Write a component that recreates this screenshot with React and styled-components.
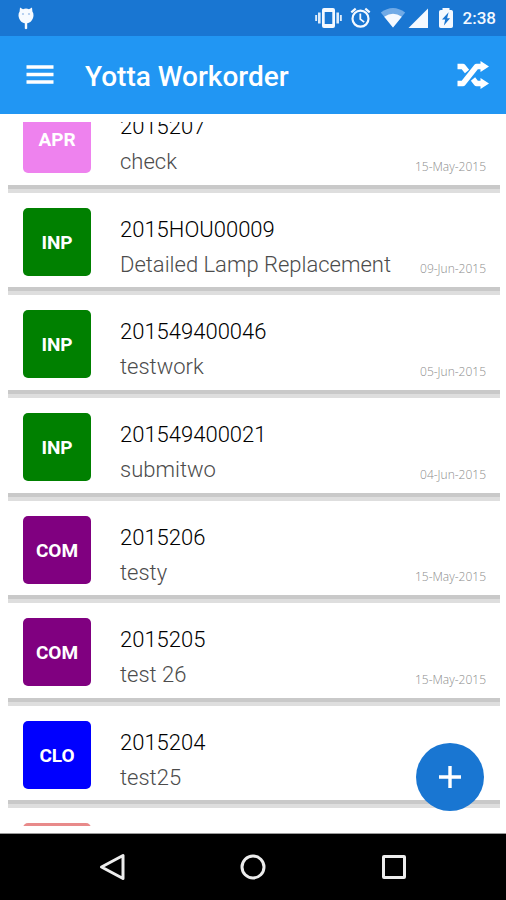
import React from "react";
import styled, { createGlobalStyle } from "styled-components";

const GlobalStyle = createGlobalStyle`
  * { box-sizing: border-box; }
  body { margin: 0; background: #fff; font-family: Roboto, "Noto Sans", sans-serif; }
  button { border: 0; padding: 0; background: none; color: inherit; font: inherit; cursor: pointer; }
  svg { display: block; }
`;

const Screen = styled.div`
  display: flex;
  flex-direction: column;
  height: 100vh;
`;

const StatusBar = styled.div`
  display: flex;
  align-items: center;
  justify-content: space-between;
  height: 36px;
  flex: none;
  padding: 0 10px 0 17px;
  background: #1976d2;
  color: #f4f9ff;
`;

const StatusIcons = styled.div`
  display: flex;
  align-items: center;
`;

const Clock = styled.time`
  margin-left: 8px;
  font-size: 17px;
  font-weight: 500;
  line-height: 36px;
`;

const AppBar = styled.header`
  display: flex;
  align-items: center;
  height: 78px;
  flex: none;
  padding: 0 17px 0 26px;
  background: #2196f3;
  color: #fff;
`;

const Title = styled.h1`
  flex: 1;
  margin: 0 0 0 31px;
  padding-top: 3px;
  font-size: 28px;
  font-weight: 500;
  line-height: 36px;
`;

const IconButton = styled.button`
  display: flex;
`;

const Main = styled.main`
  position: relative;
  display: flex;
  flex: 1;
  min-height: 0;
  padding: 8px 6px 7px 8px;
  border-bottom: 1px solid #9a9a9a;
`;

const ListWindow = styled.div`
  flex: 1;
  min-width: 0;
  overflow: hidden;
`;

const OrderList = styled.ul`
  display: grid;
  grid-template-columns: 100%;
  grid-auto-rows: 1fr;
  height: 821px;
  margin: -32px 0 0;
  padding: 0;
  list-style: none;
`;

const Row = styled.li`
  display: grid;
  grid-template-columns: 68px minmax(0, 1fr) auto;
  column-gap: 29px;
  align-items: start;
  padding: 15px 14px 0 15px;
  background: linear-gradient(#c9c9c9 50%, #dedede 50%) bottom / 100% 8px no-repeat;
`;

const Badge = styled.span`
  display: flex;
  align-items: center;
  justify-content: center;
  height: 68px;
  padding-top: 1px;
  border-radius: 5px;
  background: ${(p) => p.$color};
  color: #fff;
  font-size: 19px;
  font-weight: 700;
`;

const OrderText = styled.div`
  display: flex;
  flex-direction: column;
  padding-top: 4px;
  font-size: 22px;
  font-weight: 300;
  line-height: 35px;
  white-space: nowrap;
`;

const OrderNumber = styled.span`
  color: #000;
`;

const OrderName = styled.span`
  color: #4c4c4c;
`;

const OrderDate = styled.time`
  align-self: end;
  padding-bottom: 17px;
  color: #8c8c8c;
  font-family: "Open Sans", sans-serif;
  font-size: 12px;
  font-weight: 300;
  line-height: 18px;
  white-space: nowrap;
`;

const AddButton = styled.button`
  position: absolute;
  right: 22px;
  bottom: 22px;
  display: flex;
  align-items: center;
  justify-content: center;
  width: 68px;
  height: 68px;
  border-radius: 50%;
  background: #1976d2;
`;

const NavBar = styled.nav`
  display: flex;
  justify-content: center;
  height: 66px;
  flex: none;
  background: #000;
`;

const NavButton = styled.button`
  display: flex;
  align-items: center;
  justify-content: center;
  width: 141px;
`;

const orders = [
  { status: "APR", color: "#ee82ee", number: "2015207", name: "check", date: "15-May-2015" },
  { status: "INP", color: "#008000", number: "2015HOU00009", name: "Detailed Lamp Replacement", date: "09-Jun-2015" },
  { status: "INP", color: "#008000", number: "201549400046", name: "testwork", date: "05-Jun-2015" },
  { status: "INP", color: "#008000", number: "201549400021", name: "submitwo", date: "04-Jun-2015" },
  { status: "COM", color: "#800080", number: "2015206", name: "testy", date: "15-May-2015" },
  { status: "COM", color: "#800080", number: "2015205", name: "test 26", date: "15-May-2015" },
  { status: "CLO", color: "#0000ff", number: "2015204", name: "test25", date: "" },
  { status: "", color: "#e88a8a", number: "", name: "", date: "" },
];

const DebugIcon = () => (
  <svg width="18" height="24" viewBox="0 0 18 24" aria-hidden="true">
    <path d="M3 1.5 6 3.2Q9 2 12 3.2L15 1.5 15.4 5.5Q16.6 7 16.5 9.5C16.3 14 13 17 10.2 17.3V22.5Q9 24 7.8 22.5V17.3C5 17 1.7 14 1.5 9.5Q1.4 7 2.6 5.5Z" fill="#f7fbff" />
    <circle cx="6" cy="8" r="1.1" fill="#a9c8ee" />
    <circle cx="12" cy="8" r="1.1" fill="#a9c8ee" />
  </svg>
);

const StatusGlyphs = () => (
  <svg width="140" height="24" viewBox="315 6 140 24" aria-hidden="true">
    <g fill="#f4f9ff">
      <path fillRule="evenodd" d="M324 8h9q2 0 2 2v16q0 2-2 2h-9q-2 0-2-2V10q0-2 2-2Zm.7 4v12h7.6V12Z" />
      <path d="M318 12.5h2.6v11H318ZM336.4 12.5h2.6v11h-2.6Z" opacity=".9" />
      <path d="M315.2 15h1.9v6h-1.9ZM339.9 15h1.9v6h-1.9Z" opacity=".9" />
    </g>
    <g fill="none" stroke="#f4f9ff">
      <circle cx="360.5" cy="18.7" r="8" strokeWidth="2.2" />
      <path d="m351.3 12.4 4.4-3.7M369.7 12.4l-4.4-3.7" strokeWidth="2.2" />
      <path d="M360.3 13.6v5.5l3.9 3" strokeWidth="1.8" />
    </g>
    <path d="M380.8 12.5Q393 3.5 405.2 12.5L393 27.5Z" fill="#70aae6" />
    <path d="M384.2 16.8Q393 10.5 401.8 16.8L393 27.5Z" fill="#f4f9ff" />
    <path d="M428 8.5V28H408.5Z" fill="#f4f9ff" />
    <path d="M442.5 8h7v2h1.7q1.8 0 1.8 1.8v14.4q0 1.8-1.8 1.8h-10.4q-1.8 0-1.8-1.8V11.8q0-1.8 1.8-1.8h1.7Z" fill="#f4f9ff" />
    <path d="M448.6 12.2 442 19.5h3.2l-1.3 6 6.2-7.2h-3Z" fill="#1976d2" />
  </svg>
);

const MenuIcon = () => (
  <svg width="28" height="20" viewBox="0 0 28 20" aria-hidden="true">
    <path d="M.5 2h27M.5 9.5h27M.5 17h27" stroke="#fff" strokeWidth="3.4" />
  </svg>
);

const ShuffleIcon = () => (
  <svg width="32" height="28" viewBox="0 0 32 28" aria-hidden="true">
    <g fill="none" stroke="#fff" strokeWidth="5.4" strokeLinejoin="round">
      <path d="M0.500 22.500H6L19.500 5.500H25" />
      <path d="M0.500 5.500H6L10 10.500M16 18L19.500 22.500H25" />
    </g>
    <path d="M23.500 0 32 5.500 23.500 11ZM23.500 17 32 22.500 23.500 28Z" fill="#fff" />
  </svg>
);

const PlusIcon = () => (
  <svg width="22" height="22" viewBox="0 0 22 22" aria-hidden="true">
    <path d="M11 0v22M0 11h22" stroke="#fff" strokeWidth="3.4" />
  </svg>
);

const NavIcon = ({ children }) => (
  <svg width="30" height="30" viewBox="0 0 30 30" fill="none" stroke="#ededed" strokeWidth="3" strokeLinejoin="round" aria-hidden="true">
    {children}
  </svg>
);

export default function App() {
  return (
    <Screen>
      <GlobalStyle />
      <StatusBar>
        <DebugIcon />
        <StatusIcons>
          <StatusGlyphs />
          <Clock>2:38</Clock>
        </StatusIcons>
      </StatusBar>
      <AppBar>
        <IconButton aria-label="Menu"><MenuIcon /></IconButton>
        <Title>Yotta Workorder</Title>
        <IconButton aria-label="Shuffle"><ShuffleIcon /></IconButton>
      </AppBar>
      <Main>
        <ListWindow>
          <OrderList>
            {orders.map((order, i) => (
              <Row key={i}>
                <Badge $color={order.color}>{order.status}</Badge>
                <OrderText>
                  <OrderNumber>{order.number}</OrderNumber>
                  <OrderName>{order.name}</OrderName>
                </OrderText>
                {order.date && <OrderDate>{order.date}</OrderDate>}
              </Row>
            ))}
          </OrderList>
        </ListWindow>
        <AddButton aria-label="Add work order"><PlusIcon /></AddButton>
      </Main>
      <NavBar>
        <NavButton aria-label="Back">
          <NavIcon><path d="M26 3.500v23L4.500 15Z" /></NavIcon>
        </NavButton>
        <NavButton aria-label="Home">
          <NavIcon><circle cx="15" cy="15" r="11" /></NavIcon>
        </NavButton>
        <NavButton aria-label="Recent apps">
          <NavIcon><rect x="4.500" y="4.500" width="21" height="21" rx="0.500" /></NavIcon>
        </NavButton>
      </NavBar>
    </Screen>
  );
}
